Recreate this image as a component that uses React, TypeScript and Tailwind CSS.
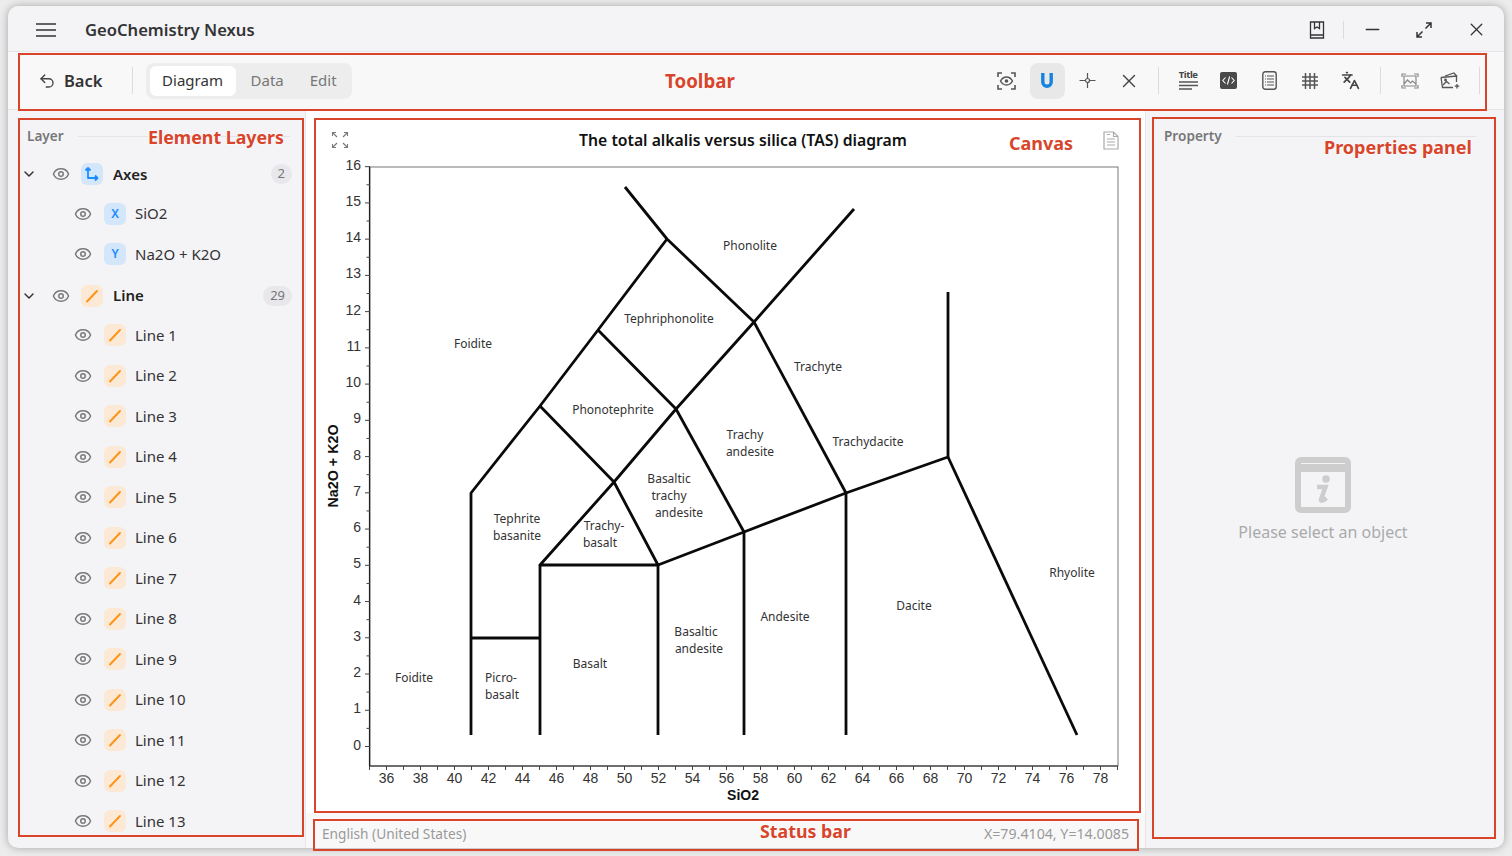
import { Eye, ChevronDown, Undo2, Minus, X, Languages } from 'lucide-react';

const UI_FONT = 'font-["Noto_Sans",sans-serif]';

const lines = [
  '625,187 667,239 754,322 854,209',
  '667,239 598,330 540,406 471,493 471,735',
  '598,330 676,409 754,322',
  '540,406 614,482 676,409',
  '754,322 846,493',
  '676,409 744,532',
  '614,482 540,565 658,565 614,482',
  '658,565 744,532 846,493 948,457 948,292',
  '948,457 1077,735',
  '540,565 540,735',
  '658,565 658,735',
  '744,532 744,735',
  '846,493 846,735',
  '471,638 540,638',
];

const regions: [string, number, number][] = [
  ['Phonolite', 750, 250],
  ['Tephriphonolite', 669, 323],
  ['Foidite', 473, 348],
  ['Trachyte', 818, 371],
  ['Phonotephrite', 613, 414],
  ['Trachy', 745, 439],
  ['andesite', 750, 456],
  ['Trachydacite', 868, 446],
  ['Basaltic', 669, 483],
  ['trachy', 669, 500],
  ['andesite', 679, 517],
  ['Tephrite', 517, 523],
  ['basanite', 517, 540],
  ['Trachy-', 604, 530],
  ['basalt', 600, 547],
  ['Rhyolite', 1072, 577],
  ['Dacite', 914, 610],
  ['Andesite', 785, 621],
  ['Basaltic', 696, 636],
  ['andesite', 699, 653],
  ['Basalt', 590, 668],
  ['Foidite', 414, 682],
  ['Picro-', 501, 682],
  ['basalt', 502, 699],
];

const yTicks = Array.from({ length: 17 }, (_, i) => i);
const xTicks = Array.from({ length: 45 }, (_, i) => 35 + i);
const yPos = (v: number) => 746.5 - v * 36.24;
const xPos = (v: number) => 369.5 + (v - 35) * 17;

function Chart() {
  return (
    <svg viewBox="306 110 839 703" className="block w-[839px] h-[703px]">
      <rect x="370" y="167" width="748" height="599" fill="none" stroke="#777" strokeWidth="1" />
      <path d="M369.5 166.5V766M369.5 766H1118" fill="none" stroke="#222" strokeWidth="1.2" />
      {yTicks.map((v) => (
        <g key={v}>
          <line x1="365" x2="370" y1={yPos(v)} y2={yPos(v)} stroke="#444" />
          {v < 16 && <line x1="366.5" x2="370" y1={yPos(v + 0.5)} y2={yPos(v + 0.5)} stroke="#444" />}
          <text x="361" y={yPos(v) + 3} textAnchor="end" fontSize="14" fill="#333" fontFamily="Liberation Sans, sans-serif">
            {v}
          </text>
        </g>
      ))}
      {xTicks.map((v) => (
        <g key={v}>
          <line x1={xPos(v)} x2={xPos(v)} y1="766" y2="770" stroke="#444" />
          {v % 2 === 0 && (
            <text x={xPos(v)} y="783" textAnchor="middle" fontSize="14" fill="#333" fontFamily="Liberation Sans, sans-serif">
              {v}
            </text>
          )}
        </g>
      ))}
      {lines.map((p) => (
        <polyline key={p} points={p} fill="none" stroke="#0a0a0a" strokeWidth="2.8" strokeLinejoin="round" />
      ))}
      {regions.map(([label, x, y]) => (
        <text key={label + x + y} x={x} y={y} textAnchor="middle" fontSize="12" fill="#333" fontFamily="Noto Sans, sans-serif">
          {label}
        </text>
      ))}
      <text x="743" y="800" textAnchor="middle" fontSize="14" fontWeight="700" fill="#111" fontFamily="Liberation Sans, sans-serif">
        SiO2
      </text>
      <text transform="translate(338 466) rotate(-90)" textAnchor="middle" fontSize="14.3" fontWeight="700" fill="#111" fontFamily="Liberation Sans, sans-serif">
        Na2O + K2O
      </text>
      <text x="743" y="146" textAnchor="middle" fontSize="15.75" fontWeight="600" fill="#111" fontFamily="Noto Sans, sans-serif">
        The total alkalis versus silica (TAS) diagram
      </text>
    </svg>
  );
}

function FitIcon() {
  return (
    <svg width="18" height="18" viewBox="0 0 18 18" fill="none" stroke="#777" strokeWidth="1.1">
      <path d="M1.5 5V1.5H5M1.5 1.5L6 6M16.5 5V1.5H13M16.5 1.5L12 6M1.5 13v3.5H5M1.5 16.5L6 12M16.5 13v3.5H13M16.5 16.5L12 12" />
    </svg>
  );
}

function DocIcon() {
  return (
    <svg width="16" height="19" viewBox="0 0 16 19" fill="none" stroke="#aaa" strokeWidth="1.2">
      <path d="M1 1h9.5L15 5.5V18H1z" />
      <path d="M10.5 1v4.5H15M4 3.5h3M4 8h8M4 11h8M4 14h8" />
    </svg>
  );
}

function AxesIcon() {
  return (
    <svg width="16" height="16" viewBox="0 0 16 16" fill="none" stroke="#1a8cff" strokeWidth="1.8" strokeLinejoin="round">
      <path d="M4 2v10h9" />
      <path d="M1.5 4.5L4 2l2.5 2.5M11 9.5L13.5 12 11 14.5" />
    </svg>
  );
}

function LineIcon() {
  return (
    <svg width="14" height="14" viewBox="0 0 14 14" fill="none" stroke="#ff9213" strokeWidth="1.9" strokeLinecap="round">
      <path d="M2 12.5L12 2" />
    </svg>
  );
}

function TypeBadge({ kind }: { kind: 'axes' | 'x' | 'y' | 'line' }) {
  if (kind === 'line') {
    return (
      <span className="flex h-[22px] w-[22px] items-center justify-center rounded-md bg-[#fbe9d6]">
        <LineIcon />
      </span>
    );
  }
  return (
    <span className="flex h-[22px] w-[22px] items-center justify-center rounded-md bg-[#d3e6fa] text-[12px] font-semibold text-[#1a8cff]">
      {kind === 'axes' ? <AxesIcon /> : kind.toUpperCase()}
    </span>
  );
}

function GroupRow({ kind, label, count }: { kind: 'axes' | 'line'; label: string; count: number }) {
  return (
    <div className="flex h-[40.5px] items-center pl-[13px] pr-[13px]">
      <ChevronDown size={16} strokeWidth={2.2} className="text-[#333]" />
      <Eye size={18} strokeWidth={2} className="ml-[15px] text-[#7a7a7a]" />
      <span className="ml-[11px]">
        <TypeBadge kind={kind} />
      </span>
      <span className="ml-[10px] flex-1 text-[15px] font-semibold text-[#222]">{label}</span>
      <span className="flex h-[20px] min-w-[21px] items-center justify-center rounded-full bg-[#e8e8ec] px-[7px] text-[13px] text-[#777]">
        {count}
      </span>
    </div>
  );
}

function ChildRow({ kind, label }: { kind: 'x' | 'y' | 'line'; label: string }) {
  return (
    <div className="flex h-[40.5px] items-center pb-[2px] pl-[66px]">
      <Eye size={18} strokeWidth={2} className="text-[#7a7a7a]" />
      <span className="ml-[12px]">
        <TypeBadge kind={kind} />
      </span>
      <span className="ml-[9px] text-[15px] text-[#333]">{label}</span>
    </div>
  );
}

function PanelHeader({ title }: { title: string }) {
  return (
    <div className="flex h-[17px] items-center">
      <span className="text-[13.6px] font-semibold text-[#777]">{title}</span>
      <span className="ml-[14px] h-px flex-1 bg-[#e4e4e8]" />
    </div>
  );
}

function ToolButton({ children, active }: { children: React.ReactNode; active?: boolean }) {
  return (
    <span className={`flex h-[36px] w-[40.6px] items-center justify-center ${active ? 'relative' : ''}`}>
      {active && <span className="absolute left-[3px] top-0 h-[36px] w-[35px] rounded-lg bg-[#e8e8e8]" />}
      <span className="relative flex items-center justify-center">{children}</span>
    </span>
  );
}

function Divider() {
  return <span className="block h-[27px] w-px bg-[#dcdcdc]" />;
}

function ExpandIcon() {
  return (
    <svg width="16" height="16" viewBox="0 0 16 16" fill="none" stroke="#333" strokeWidth="1.5">
      <path d="M9.5 6.5L15 1M10 1h5v5M6.5 9.5L1 15M1 10v5h5" />
    </svg>
  );
}

function BookIcon() {
  return (
    <svg width="16" height="18" viewBox="0 0 16 18" fill="none" stroke="#333" strokeWidth="1.3">
      <path d="M1.5 1h13v13h-13zM1.5 14v3h13v-3" />
      <path d="M5.5 1v6.5L8 6l2.5 1.5V1" />
    </svg>
  );
}

function ScanEyeIcon() {
  return (
    <svg width="19" height="18" viewBox="0 0 19 18" fill="none" stroke="#555" strokeWidth="1.6">
      <path d="M1 5V1h4M14 1h4v4M1 13v4h4M14 17h4v-4" />
      <path d="M3.5 9C5 6.3 7 5 9.5 5s4.5 1.3 6 4c-1.5 2.7-3.5 4-6 4s-4.5-1.3-6-4z" strokeWidth="1.5" />
      <circle cx="9.5" cy="9" r="1.8" fill="#555" stroke="none" />
    </svg>
  );
}

function MagnetIcon() {
  return (
    <svg width="14" height="16" viewBox="0 0 14 16" fill="none">
      <path d="M2.8 0v9a4.2 4.2 0 0 0 8.4 0V0" stroke="#1583e0" strokeWidth="3.4" />
    </svg>
  );
}

function CrossIcon() {
  return (
    <svg width="17" height="17" viewBox="0 0 17 17" fill="none" stroke="#555" strokeWidth="1.2">
      <path d="M0.5 8.5h16M8.5 1v15" />
      <circle cx="8.5" cy="8.5" r="2" fill="#f8f8f8" />
    </svg>
  );
}

function TitleIcon() {
  return (
    <span className="flex w-[19px] flex-col items-center">
      <span className="text-[9.5px] font-bold leading-[10px] tracking-[-0.4px] text-[#444]">Title</span>
      <svg width="19" height="11" viewBox="0 0 19 11" stroke="#555" strokeWidth="1.3">
        <path d="M0 2h19M0 5.5h19M0 9h13" />
      </svg>
    </span>
  );
}

function CodeIcon() {
  return (
    <svg width="17" height="17" viewBox="0 0 17 17" fill="none">
      <rect width="17" height="17" rx="2" fill="#4a4a4a" />
      <path d="M5.5 5.5L2.8 8.5l2.7 3M11.5 5.5l2.7 3-2.7 3M9.6 4.5L7.4 12.5" stroke="#fff" strokeWidth="1.1" />
    </svg>
  );
}

function ListIcon() {
  return (
    <svg width="15" height="19" viewBox="0 0 15 19" fill="none" stroke="#555" strokeWidth="1.4">
      <rect x="0.8" y="0.8" width="13.4" height="17.4" rx="2.5" />
      <path d="M5 5h7M5 8h7M5 11h7M5 14h7M3 5h1M3 8h1M3 11h1M3 14h1" strokeWidth="1.2" />
    </svg>
  );
}

function GridIcon() {
  return (
    <svg width="16" height="16" viewBox="0 0 16 16" fill="none" stroke="#555" strokeWidth="1.5">
      <path d="M0 4h16M0 8h16M0 12h16M3.5 0v16M8 0v16M12.5 0v16" />
    </svg>
  );
}

function FrameImageIcon() {
  return (
    <svg width="18" height="16" viewBox="0 0 18 16" fill="none" stroke="#888" strokeWidth="1.2">
      <path d="M1 4V1h4M13 1h4v3M1 12v3h4M13 15h4v-3" />
      <path d="M3 3h12v10H3zM3 11l3.5-4 3 3 2-2 3.5 3" />
    </svg>
  );
}

function StackImageIcon() {
  return (
    <svg width="21" height="17" viewBox="0 0 21 17" fill="none" stroke="#555" strokeWidth="1.3">
      <path d="M5 4l9-3 3 3.5" />
      <path d="M1 5.5l15.5-1.5v6M1 5.5l1.5 10H13" />
      <path d="M3 13l3.5-3.5 3 2.5" />
      <circle cx="5.5" cy="8" r="0.8" />
      <path d="M17 12v4.5M14.7 14.2h4.6" />
    </svg>
  );
}

function InfoWindowIcon() {
  return (
    <svg width="56" height="56" viewBox="0 0 56 56" className="block">
      <rect x="3" y="3" width="50" height="50" rx="3" fill="none" stroke="#cdcdcd" strokeWidth="6" />
      <rect x="6" y="7" width="44" height="8" fill="#cdcdcd" />
      <circle cx="31" cy="22" r="3.8" fill="#cdcdcd" />
      <path d="M22 30h8.5l-4.5 12.5c-.5 2 2 1.6 5.5-1.5" fill="none" stroke="#cdcdcd" strokeWidth="4.4" />
    </svg>
  );
}

const noteText = 'absolute font-bold leading-none text-[#d8452b] [text-shadow:0_0_2px_#fff,0_0_2px_#fff]';
const noteBox = 'absolute border-2 border-[#d8452b]';

export default function App() {
  return (
    <div className={`relative h-[856px] w-[1512px] overflow-hidden bg-[#ececec] pl-[8px] pt-[6px] ${UI_FONT}`}>
      <div className="flex h-[842px] w-[1496px] flex-col overflow-hidden rounded-[10px] bg-[#f4f4f7] shadow-[0_0_8px_rgba(0,0,0,0.3)]">
        {/* title bar */}
        <header className="flex h-[46px] shrink-0 items-center border-b border-[#e6e6e8] pl-[28px] pt-[2px]">
          <svg width="20" height="14" viewBox="0 0 20 14" stroke="#333" strokeWidth="1.6">
            <path d="M0 1h20M0 7h20M0 13h20" />
          </svg>
          <span className="ml-[29px] flex-1 pt-[1px] text-[16.6px] font-semibold text-[#333]">GeoChemistry Nexus</span>
          <BookIcon />
          <span className="ml-[18px] h-[18px] w-px bg-[#dcdcdc]" />
          <span className="flex w-[56px] justify-center">
            <Minus size={21} strokeWidth={1.9} className="text-[#333]" />
          </span>
          <span className="flex w-[48px] justify-center">
            <ExpandIcon />
          </span>
          <span className="flex w-[56px] justify-center">
            <X size={21} strokeWidth={1.5} className="text-[#333]" />
          </span>
        </header>

        {/* toolbar */}
        <div className="flex h-[58px] shrink-0 items-center border-b border-[#e6e6e8] bg-[#f8f8f8] pl-[30px]">
          <Undo2 size={18} strokeWidth={1.8} className="text-[#444]" />
          <span className="ml-[8px] pt-[1px] text-[16.5px] font-semibold text-[#333]">Back</span>
          <span className="ml-[29px]">
            <Divider />
          </span>
          <div className="ml-[13px] flex h-[36px] w-[206px] items-center rounded-lg bg-[#ededed] px-[4px] text-[15px]">
            <span className="flex h-[30px] w-[86px] items-center justify-center rounded-md bg-white text-[#333]">Diagram</span>
            <span className="ml-[15px] text-[#777]">Data</span>
            <span className="ml-[26px] text-[#777]">Edit</span>
          </div>
          <div className="flex-1" />
          <div className="flex items-center">
            <ToolButton>
              <ScanEyeIcon />
            </ToolButton>
            <ToolButton active>
              <MagnetIcon />
            </ToolButton>
            <ToolButton>
              <CrossIcon />
            </ToolButton>
            <ToolButton>
              <X size={22} strokeWidth={1.5} className="text-[#444]" />
            </ToolButton>
            <span className="ml-[9px] mr-[9px]">
              <Divider />
            </span>
            <ToolButton>
              <TitleIcon />
            </ToolButton>
            <ToolButton>
              <CodeIcon />
            </ToolButton>
            <ToolButton>
              <ListIcon />
            </ToolButton>
            <ToolButton>
              <GridIcon />
            </ToolButton>
            <ToolButton>
              <Languages size={19} strokeWidth={2.1} className="text-[#444]" />
            </ToolButton>
            <span className="ml-[9px] mr-[9px]">
              <Divider />
            </span>
            <ToolButton>
              <FrameImageIcon />
            </ToolButton>
            <ToolButton>
              <StackImageIcon />
            </ToolButton>
            <span className="ml-[8px] mr-[24px]">
              <Divider />
            </span>
          </div>
        </div>

        <div className="flex min-h-0 flex-1">
          {/* layers */}
          <aside className="w-[298px] shrink-0 overflow-hidden border-r border-[#e6e6e8]">
            <div className="pl-[19px] pr-[15px] pt-[18px]">
              <PanelHeader title="Layer" />
            </div>
            <div className="pt-[8.75px]">
              <GroupRow kind="axes" label="Axes" count={2} />
              <ChildRow kind="x" label="SiO2" />
              <ChildRow kind="y" label="Na2O + K2O" />
              <GroupRow kind="line" label="Line" count={29} />
              {Array.from({ length: 13 }, (_, i) => (
                <ChildRow key={i} kind="line" label={`Line ${i + 1}`} />
              ))}
            </div>
          </aside>

          {/* canvas and status */}
          <main className="flex w-[839px] shrink-0 flex-col">
            <div className="relative h-[703px] bg-white">
              <Chart />
              <span className="absolute left-[25px] top-[21px]">
                <FitIcon />
              </span>
              <span className="absolute left-[797px] top-[21px]">
                <DocIcon />
              </span>
            </div>
            <footer className="flex flex-1 items-center justify-between bg-[#f8f8f8] pl-[16px] pr-[16px] pt-[7px] text-[#9a9a9a]">
              <span className="text-[13.7px]">English (United States)</span>
              <span className="text-[14.2px]">X=79.4104, Y=14.0085</span>
            </footer>
          </main>

          {/* properties */}
          <aside className="flex flex-1 flex-col border-l border-[#e6e6e8]">
            <div className="pl-[18px] pr-[28px] pt-[18px]">
              <PanelHeader title="Property" />
            </div>
            <div className="flex flex-col items-center pr-[4px] pt-[312px]">
              <InfoWindowIcon />
              <span className="mt-[7px] text-[16px] text-[#aaa]">Please select an object</span>
            </div>
          </aside>
        </div>
      </div>

      {/* red annotations */}
      <div className={`${noteBox} left-[18px] top-[53px] h-[58px] w-[1469px]`} />
      <div className={`${noteBox} left-[18px] top-[118px] h-[719px] w-[286px]`} />
      <div className={`${noteBox} left-[314px] top-[118px] h-[695px] w-[827px]`} />
      <div className={`${noteBox} left-[313px] top-[819px] h-[32px] w-[826px]`} />
      <div className={`${noteBox} left-[1152px] top-[117px] h-[722px] w-[344px]`} />
      <span className={`${noteText} left-[665px] top-[72px] text-[18.7px]`}>Toolbar</span>
      <span className={`${noteText} left-[148px] top-[129px] text-[17.8px]`}>Element Layers</span>
      <span className={`${noteText} left-[1009px] top-[134px] text-[18px]`}>Canvas</span>
      <span className={`${noteText} left-[1324px] top-[138px] text-[18px]`}>Properties panel</span>
      <span className={`${noteText} left-[760px] top-[823px] text-[17.8px]`}>Status bar</span>
    </div>
  );
}
